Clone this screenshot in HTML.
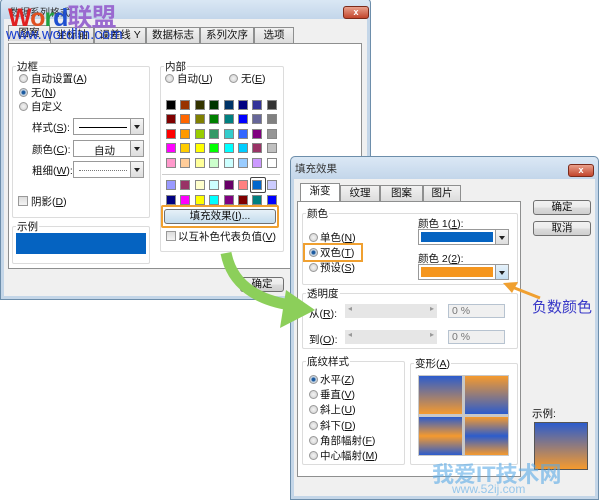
<!DOCTYPE html>
<html><head><meta charset="utf-8"><style>
*{box-sizing:border-box;margin:0;padding:0}
body{width:600px;height:502px;background:#fff;position:relative;overflow:hidden;font-family:"Liberation Sans","Noto Sans CJK SC",sans-serif;font-size:10.5px;color:#111}
.a{position:absolute}
.dlg{position:absolute;background:#f0f0f0;border:1px solid #6d8eab;border-radius:5px 5px 0 0;box-shadow:0 0 0 3px #c4d6e8 inset}
.title{position:absolute;left:0;right:0;top:0;height:20px;background:linear-gradient(#dbe8f5,#c3d6ea);border-radius:5px 5px 0 0}
.close{position:absolute;width:26px;height:13px;background:linear-gradient(#e9a08c,#c2462d);border:1px solid #7b2a1a;border-radius:3px;color:#fff;font-size:9px;font-weight:bold;text-align:center;line-height:11px}
.panel{position:absolute;background:#fff;border:1px solid #8e8f8f}
.tab{position:absolute;height:16px;border:1px solid #8e8f8f;border-bottom:none;background:linear-gradient(#f2f2f2,#dcdcdc);text-align:center;line-height:15px;font-size:10.5px}
.tab.on{background:#fff;height:18px}
.grp{position:absolute;border:1px solid #dcdcdc;border-radius:2px}
.gl{position:absolute;top:-8px;left:3px;background:#fff;padding:0 1px}
.rad{position:absolute;width:9px;height:9px;border-radius:50%;border:1px solid #999;background:radial-gradient(#f4f4f4,#ccc)}
.rad.on{background:radial-gradient(#1b5aa0 30%,#bcd 50%,#eee)}
.chk{position:absolute;width:10px;height:10px;border:1px solid #999;background:linear-gradient(#ddd,#f5f5f5)}
.dd{position:absolute;border:1px solid #999;background:#fff}
.dd b{position:absolute;right:0;top:0;bottom:0;width:13px;border-left:1px solid #999;background:linear-gradient(#f6f6f6,#ddd)}
.dd b:after{content:"";position:absolute;left:3px;top:6px;border:3px solid transparent;border-top:4px solid #222}
.btn{position:absolute;border:1px solid #707070;border-radius:3px;background:linear-gradient(#f2f2f2,#ebebeb 50%,#dcdcdc 51%,#cfcfcf);text-align:center;line-height:13px}
.sw{position:absolute;width:10px;height:10px;border:1px solid #888}
</style></head><body>

<div class="dlg" style="left:0;top:-2px;width:371px;height:302px">
 <div class="title"></div>
 <div class="close" style="left:342px;top:7px">x</div>
</div>
<div class="a" style="left:10px;top:4px;color:#333;font-size:10px">数据系列格式</div>
<div class="tab" style="left:8px;top:25px;width:42px">图案</div>
<div class="tab" style="left:50px;top:27px;width:44px">坐标轴</div>
<div class="tab" style="left:94px;top:27px;width:52px">误差线 Y</div>
<div class="tab" style="left:146px;top:27px;width:54px">数据标志</div>
<div class="tab" style="left:200px;top:27px;width:54px">系列次序</div>
<div class="tab" style="left:254px;top:27px;width:40px">选项</div>
<div class="panel" style="left:8px;top:43px;width:354px;height:226px"></div>

<div class="grp" style="left:12px;top:66px;width:138px;height:152px"><span class="gl">边框</span></div>
<div class="rad" style="left:19px;top:74px"></div><div class="a" style="left:31px;top:71px">自动设置(<u>A</u>)</div>
<div class="rad on" style="left:19px;top:88px"></div><div class="a" style="left:31px;top:85px">无(<u>N</u>)</div>
<div class="rad" style="left:19px;top:102px"></div><div class="a" style="left:31px;top:99px">自定义</div>
<div class="a" style="left:32px;top:120px">样式(<u>S</u>):</div>
<div class="dd" style="left:73px;top:118px;width:71px;height:17px"><i class="a" style="left:5px;top:8px;width:48px;border-top:1px solid #000"></i><b></b></div>
<div class="a" style="left:32px;top:142px">颜色(<u>C</u>):</div>
<div class="dd" style="left:73px;top:140px;width:71px;height:17px"><span class="a" style="left:20px;top:2px">自动</span><b></b></div>
<div class="a" style="left:32px;top:163px">粗细(<u>W</u>):</div>
<div class="dd" style="left:73px;top:161px;width:71px;height:17px"><i class="a" style="left:5px;top:8px;width:48px;border-top:1px dotted #777"></i><b></b></div>
<div class="chk" style="left:18px;top:196px"></div><div class="a" style="left:31px;top:194px">阴影(<u>D</u>)</div>

<div class="grp" style="left:12px;top:226px;width:138px;height:38px"><span class="gl">示例</span></div>
<div class="a" style="left:16px;top:233px;width:130px;height:21px;background:#0563c1"></div>

<div class="grp" style="left:160px;top:66px;width:124px;height:186px"><span class="gl">内部</span></div>
<div class="rad" style="left:165px;top:74px"></div><div class="a" style="left:177px;top:71px">自动(<u>U</u>)</div>
<div class="rad" style="left:229px;top:74px"></div><div class="a" style="left:241px;top:71px">无(<u>E</u>)</div>
<div class="a" style="left:162px;top:174px;width:118px;border-top:1px solid #ccc"></div>
<div id="grid"></div>
<div class="a" style="left:161px;top:205px;width:118px;height:23px;border:2px solid #f0a030;border-radius:2px"></div>
<div class="btn" style="left:164px;top:209px;width:112px;height:15px;background:linear-gradient(#e6f1f8,#c4dced)">填充效果(<u>I</u>)...</div>
<div class="chk" style="left:166px;top:231px"></div><div class="a" style="left:178px;top:229px">以互补色代表负值(<u>V</u>)</div>
<div class="btn" style="left:240px;top:277px;width:44px;height:15px">确定</div>

<div class="a" style="left:8px;top:4px;font-size:25px;font-weight:bold;line-height:28px;letter-spacing:-1px"><span style="color:#e02020">W</span><span style="color:#e05020">o</span><span style="color:#20a040">r</span><span style="color:#2050d0">d</span><span style="color:#9a6ad0">联盟</span></div>
<div class="a" style="left:6px;top:27px;font-size:15px;color:#1a3fd0;line-height:16px">www.wordlm.com</div>

<div class="dlg" style="left:290px;top:156px;width:309px;height:344px">
 <div class="title" style="height:22px"></div>
 <div class="close" style="left:277px;top:7px">x</div>
</div>
<div class="a" style="left:295px;top:161px;color:#333">填充效果</div>
<div class="tab on" style="left:300px;top:183px;width:40px">渐变</div>
<div class="tab" style="left:340px;top:185px;width:40px">纹理</div>
<div class="tab" style="left:380px;top:185px;width:43px">图案</div>
<div class="tab" style="left:423px;top:185px;width:38px">图片</div>
<div class="panel" style="left:297px;top:201px;width:224px;height:276px"></div>
<div class="btn" style="left:533px;top:200px;width:58px;height:15px">确定</div>
<div class="btn" style="left:533px;top:221px;width:58px;height:15px">取消</div>

<div class="grp" style="left:302px;top:213px;width:216px;height:72px"><span class="gl">颜色</span></div>
<div class="rad" style="left:309px;top:233px"></div><div class="a" style="left:320px;top:230px">单色(<u>N</u>)</div>
<div class="rad on" style="left:309px;top:248px"></div><div class="a" style="left:320px;top:245px">双色(<u>T</u>)</div>
<div class="rad" style="left:309px;top:263px"></div><div class="a" style="left:320px;top:260px">预设(<u>S</u>)</div>
<div class="a" style="left:303px;top:243px;width:60px;height:19px;border:2px solid #f0a030"></div>
<div class="a" style="left:418px;top:216px">颜色 1(<u>1</u>):</div>
<div class="dd" style="left:418px;top:229px;width:91px;height:16px"><i class="a" style="left:2px;top:2px;width:72px;height:10px;background:#0563c1"></i><b></b></div>
<div class="a" style="left:418px;top:251px">颜色 2(<u>2</u>):</div>
<div class="dd" style="left:418px;top:264px;width:91px;height:16px"><i class="a" style="left:2px;top:2px;width:72px;height:10px;background:#f5961e"></i><b style="background:linear-gradient(#e6f2fb,#c4def2)"></b></div>

<div class="grp" style="left:302px;top:293px;width:216px;height:56px"><span class="gl">透明度</span></div>
<div class="a" style="left:309px;top:306px">从(<u>R</u>):</div>
<div class="a" style="left:345px;top:304px;width:92px;height:14px;background:#e6e6e6;color:#999;font-size:8px;padding-left:3px">◂<span style="float:right;padding-right:3px">▸</span></div>
<div class="a" style="left:448px;top:304px;width:57px;height:14px;border:1px solid #b7c3d0;background:#f0f0f0;color:#777;padding-left:3px;line-height:12px">0 %</div>
<div class="a" style="left:309px;top:332px">到(<u>O</u>):</div>
<div class="a" style="left:345px;top:330px;width:92px;height:14px;background:#e6e6e6;color:#999;font-size:8px;padding-left:3px">◂<span style="float:right;padding-right:3px">▸</span></div>
<div class="a" style="left:448px;top:330px;width:57px;height:14px;border:1px solid #b7c3d0;background:#f0f0f0;color:#777;padding-left:3px;line-height:12px">0 %</div>

<div class="grp" style="left:302px;top:361px;width:103px;height:104px"><span class="gl">底纹样式</span></div>
<div class="rad on" style="left:309px;top:375px"></div><div class="a" style="left:320px;top:372px">水平(<u>Z</u>)</div>
<div class="rad" style="left:309px;top:390px"></div><div class="a" style="left:320px;top:387px">垂直(<u>V</u>)</div>
<div class="rad" style="left:309px;top:405px"></div><div class="a" style="left:320px;top:402px">斜上(<u>U</u>)</div>
<div class="rad" style="left:309px;top:421px"></div><div class="a" style="left:320px;top:418px">斜下(<u>D</u>)</div>
<div class="rad" style="left:309px;top:436px"></div><div class="a" style="left:320px;top:433px">角部幅射(<u>F</u>)</div>
<div class="rad" style="left:309px;top:451px"></div><div class="a" style="left:320px;top:448px">中心幅射(<u>M</u>)</div>

<div class="grp" style="left:410px;top:363px;width:108px;height:102px"><span class="gl">变形(<u>A</u>)</span></div>
<div class="a" style="left:418px;top:375px;width:91px;height:81px;background:#c8c8c8"></div>
<div class="a" style="left:419px;top:376px;width:43px;height:38px;background:linear-gradient(#2c5ccc,#f59a2e)"></div>
<div class="a" style="left:465px;top:376px;width:43px;height:38px;background:linear-gradient(#f59a2e,#2c5ccc)"></div>
<div class="a" style="left:419px;top:417px;width:43px;height:38px;background:linear-gradient(#2c5ccc,#f59a2e 50%,#2c5ccc)"></div>
<div class="a" style="left:465px;top:417px;width:43px;height:38px;background:linear-gradient(#f59a2e,#2c5ccc 50%,#f59a2e)"></div>

<div class="a" style="left:532px;top:406px">示例:</div>
<div class="a" style="left:534px;top:422px;width:54px;height:48px;border:1px solid #555;background:linear-gradient(#2c5ccc,#f59a2e)"></div>

<div class="a" style="left:532px;top:296px;font-size:15px;color:#3838c8">负数颜色</div>

<svg class="a" style="left:0;top:0" width="600" height="502">
 <path d="M226 253 C232 285 258 300 290 305" stroke="#8ccf5a" stroke-width="11" fill="none"/>
 <polygon points="286,290 315,310 280,328" fill="#8ccf5a"/>
 <line x1="540" y1="298" x2="512" y2="287" stroke="#f0a030" stroke-width="3"/>
 <polygon points="503,283 518,282 512,293" fill="#f0a030"/>
</svg>

<div class="a" style="left:432px;top:457px;font-size:22px;font-weight:bold;color:rgba(90,170,230,.6)">我爱IT技术网</div>
<div class="a" style="left:452px;top:482px;font-size:12px;color:rgba(90,170,230,.6)">www.52ij.com</div>

<script>
var c=[["#000","#993300","#333300","#003300","#003366","#000080","#333399","#333"],
["#800000","#ff6600","#808000","#008000","#008080","#0000ff","#666699","#808080"],
["#f00","#ff9900","#99cc00","#339966","#33cccc","#3366ff","#800080","#969696"],
["#f0f","#ffcc00","#ff0","#0f0","#0ff","#00ccff","#993366","#c0c0c0"],
["#ff99cc","#ffcc99","#ffff99","#ccffcc","#ccffff","#99ccff","#cc99ff","#fff"],
["#9999ff","#993366","#ffffcc","#ccffff","#660066","#ff8080","#0066cc","#ccccff"],
["#000080","#f0f","#ff0","#0ff","#800080","#800000","#008080","#00f"]];
var ys=[100,114,129,143,158,180,195],h="";
for(var r=0;r<7;r++)for(var i=0;i<8;i++){h+='<div class="sw" style="left:'+(166+i*14.4)+'px;top:'+ys[r]+'px;background:'+c[r][i]+'"></div>';}
h+='<div class="a" style="left:250px;top:177px;width:16px;height:16px;border:1px solid #444;border-radius:2px"></div>';
document.getElementById('grid').innerHTML=h;
</script>
</body></html>
